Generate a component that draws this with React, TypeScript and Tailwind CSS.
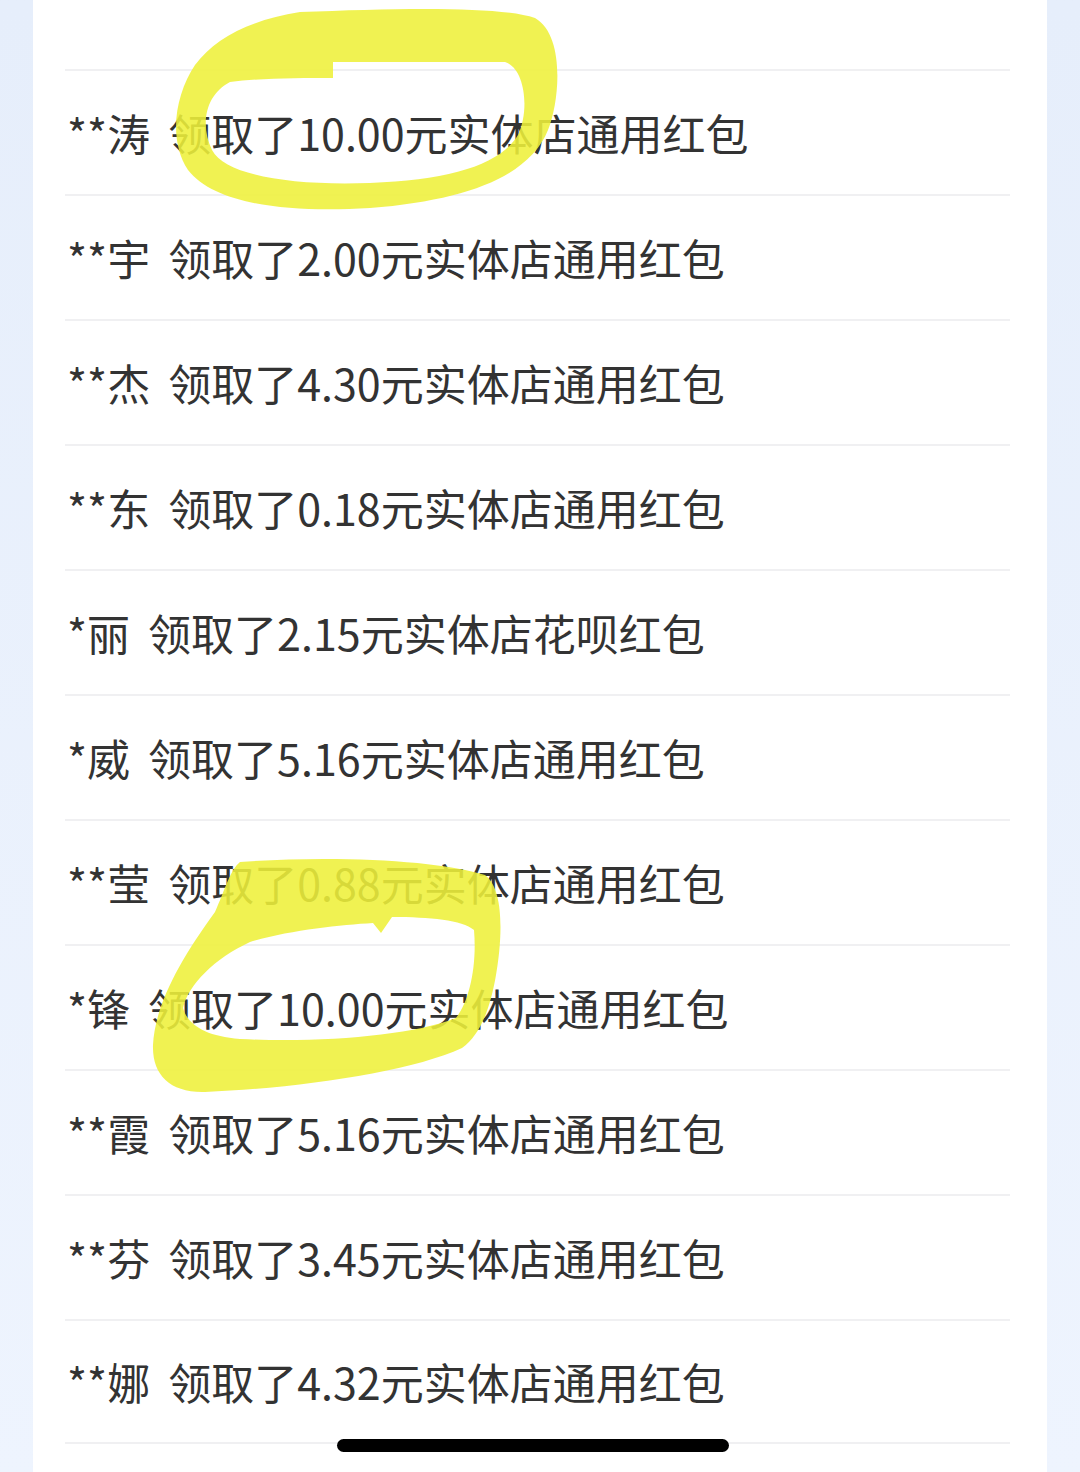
import React from "react";

const rows: { name: string; text: string }[] = [
  { name: "**涛", text: "领取了10.00元实体店通用红包" },
  { name: "**宇", text: "领取了2.00元实体店通用红包" },
  { name: "**杰", text: "领取了4.30元实体店通用红包" },
  { name: "**东", text: "领取了0.18元实体店通用红包" },
  { name: "*丽", text: "领取了2.15元实体店花呗红包" },
  { name: "*威", text: "领取了5.16元实体店通用红包" },
  { name: "**莹", text: "领取了0.88元实体店通用红包" },
  { name: "*锋", text: "领取了10.00元实体店通用红包" },
  { name: "**霞", text: "领取了5.16元实体店通用红包" },
  { name: "**芬", text: "领取了3.45元实体店通用红包" },
  { name: "**娜", text: "领取了4.32元实体店通用红包" },
];

export default function App() {
  return (
    <div
      className="relative w-[1080px] h-[1472px] overflow-hidden bg-gradient-to-b from-[#e6eefb] to-[#eef4fe] flex px-[33px]"
      style={{ fontFamily: '"Noto Sans CJK SC", "Noto Sans", sans-serif' }}
    >
      <div className="flex-1 bg-white pt-[69px] pl-[32px] pr-[37px]">
        {rows.map((r, i) => (
          <div
            key={i}
            className={
              "h-[125px] flex items-center border-t-2 border-[#f0f0f2] pl-[2px] text-[43px] leading-none text-[#333333] whitespace-pre" +
              (i === rows.length - 1 ? " border-b-2" : "")
            }
          >
            <span>{r.name}</span>
            <span className="ml-[18px]">{r.text}</span>
          </div>
        ))}
      </div>

      {/* home indicator */}
      <div className="absolute left-[337px] top-[1439px] w-[392px] h-[13px] rounded-full bg-black" />

      {/* highlighter marks */}
      <svg
        className="absolute left-0 top-0 pointer-events-none"
        width="1080"
        height="1472"
        viewBox="0 0 1080 1472"
      >
        <g fill="#eef03a" fillRule="evenodd" opacity="0.88">
          <path d="M 300 12 C 400 8, 500 6, 535 18 C 565 35, 560 100, 548 130 C 530 175, 470 200, 370 208 C 290 213, 215 205, 188 170 C 168 140, 175 95, 195 65 C 215 38, 250 20, 300 12 Z M 333 62 L 505 62 C 525 68, 530 110, 518 135 C 500 165, 450 180, 370 183 C 290 186, 225 175, 212 150 C 200 125, 205 95, 230 82 C 260 78, 300 78, 333 78 Z" />
          <path d="M 240 862 C 330 855, 440 860, 485 875 C 505 890, 502 940, 496 975 C 490 1010, 480 1035, 462 1048 C 410 1072, 300 1088, 205 1092 C 170 1093, 152 1075, 153 1045 C 155 1005, 180 960, 215 912 C 225 890, 230 870, 240 862 Z M 250 942 C 290 930, 340 925, 373 923 L 381 933 L 392 917 C 430 917, 462 920, 474 930 C 477 965, 470 1000, 456 1018 C 410 1036, 320 1043, 240 1039 C 205 1036, 188 1025, 183 1008 C 188 985, 215 958, 250 942 Z" />
        </g>
      </svg>
    </div>
  );
}
